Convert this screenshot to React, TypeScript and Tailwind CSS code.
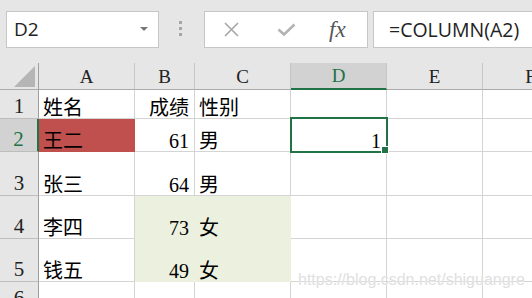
const serif = "font-['Liberation_Serif','Noto_Sans_CJK_SC',serif]";

type Row = {
  n: number;
  h: string;
  cells: string[];
};

const rows: Row[] = [
  { n: 1, h: "h-[29px]", cells: ["姓名", "成绩", "性别", "", "", ""] },
  { n: 2, h: "h-[33px]", cells: ["王二", "61", "男", "1", "", ""] },
  { n: 3, h: "h-[44px]", cells: ["张三", "64", "男", "", "", ""] },
  { n: 4, h: "h-[43px]", cells: ["李四", "73", "女", "", "", ""] },
  { n: 5, h: "h-[43px]", cells: ["钱五", "49", "女", "", "", ""] },
  { n: 6, h: "h-[29px]", cells: ["", "", "", "", "", ""] },
];

const letters = ["A", "B", "C", "D", "E", "F"];

const cellClass = (r: number, c: number) => {
  const isNum = c === 1 || (r === 2 && c === 3);
  const align = isNum ? "justify-end pr-[5px]" : "justify-start pl-[4px]";
  let fill = "bg-white border-[#d4d4d4]";
  if (r === 2 && c === 0) fill = "bg-[#c0504d] border-[#c0504d]";
  if ((r === 4 || r === 5) && (c === 1 || c === 2)) fill = "bg-[#ebf1de] border-[#ebf1de]";
  return `relative flex items-end border-r border-b whitespace-nowrap text-[20px] leading-none text-black ${align} ${fill}`;
};

const TopBar = () => (
  <div className="h-[63px] bg-[#e6e6e6] flex items-start pt-[11px] pl-[6px]">
    <div className="w-[153px] h-[37px] bg-white border border-[#c6c6c6] flex items-center justify-between pl-[7px] pr-[10px]">
      <span className="font-['Open_Sans',sans-serif] text-[19px] text-[#222]">D2</span>
      <svg width="8" height="5" viewBox="0 0 8 5">
        <path d="M0 0 L8 0 L4 4 Z" fill="#777" />
      </svg>
    </div>
    <div className="w-[45px] flex flex-col items-start pl-[20px] pt-[10px] gap-[3px]">
      <div className="w-[3px] h-[3px] bg-[#a6a6a6]" />
      <div className="w-[3px] h-[3px] bg-[#a6a6a6]" />
      <div className="w-[3px] h-[3px] bg-[#a6a6a6]" />
    </div>
    <div className="w-[164px] h-[37px] bg-white border border-[#c6c6c6] flex items-center pl-[18px]">
      <svg width="17" height="15" viewBox="0 0 17 15">
        <path d="M2 1 L15 14 M15 1 L2 14" stroke="#a6a6a6" strokeWidth="1.6" fill="none" />
      </svg>
      <svg className="ml-[37px]" width="19" height="13" viewBox="0 0 19 13">
        <path d="M1.5 6.5 L7 11.5 L17.5 1.5" stroke="#b3b3b3" strokeWidth="2.6" fill="none" />
      </svg>
      <span className="ml-[33px] font-['Liberation_Serif',serif] italic text-[23px] leading-none text-[#555]">
        fx
      </span>
    </div>
    <div className="ml-[5px] flex-1 h-[37px] bg-white border border-r-0 border-[#c6c6c6] flex items-center pl-[15px]">
      <span className="font-['Open_Sans',sans-serif] text-[19.5px] text-[#222]">=COLUMN(A2)</span>
    </div>
  </div>
);

export default function App() {
  return (
    <div className="w-[532px] h-[298px] overflow-hidden bg-white relative">
      <TopBar />
      <div className="grid grid-cols-[39px_96px_60px_96px_96px_96px_96px] h-[27px]">
        <div className="bg-[#e6e6e6] border-r border-b border-r-[#9e9e9e] border-b-[#ababab] flex items-end justify-end pr-[3px] pb-[2px]">
          <svg width="21" height="21" viewBox="0 0 21 21">
            <path d="M21 0 L21 21 L0 21 Z" fill="#b5b5b5" />
          </svg>
        </div>
        {letters.map((l) =>
          l === "D" ? (
            <div
              key={l}
              className={`bg-[#d2d2d2] border-r border-b-2 border-r-[#c6c6c6] border-b-[#217346] flex items-center justify-center text-[19px] leading-none text-[#217346] ${serif}`}
            >
              {l}
            </div>
          ) : (
            <div
              key={l}
              className={`bg-[#e6e6e6] border-r border-b border-r-[#c6c6c6] border-b-[#ababab] flex items-center justify-center text-[19px] leading-none text-[#222] ${serif}`}
            >
              {l}
            </div>
          )
        )}
      </div>
      {rows.map((row) => (
        <div key={row.n} className={`grid grid-cols-[39px_96px_60px_96px_96px_96px_96px] ${row.h}`}>
          {row.n === 2 ? (
            <div
              className={`bg-[#d2d2d2] border-r-2 border-b border-r-[#217346] border-b-[#bdbdbd] flex items-end justify-center pb-[1px] text-[21px] leading-none text-[#217346] ${serif}`}
            >
              {row.n}
            </div>
          ) : (
            <div
              className={`bg-[#e6e6e6] border-r border-b border-r-[#9e9e9e] border-b-[#bdbdbd] flex items-end justify-center pb-[1px] text-[21px] leading-none text-[#222] ${serif}`}
            >
              {row.n}
            </div>
          )}
          {row.cells.map((v, c) => (
            <div key={c} className={`${cellClass(row.n, c)} ${serif}`}>
              <span>{v}</span>
              {row.n === 2 && c === 3 ? (
                <>
                  <div className="absolute z-10 -left-[1px] -top-[2px] -right-[2px] -bottom-[2px] border-2 border-[#217346]" />
                  <div className="absolute z-20 -right-[3px] -bottom-[3px] w-[8px] h-[8px] bg-[#217346] border border-white" />
                </>
              ) : null}
            </div>
          ))}
        </div>
      ))}
      <div className="absolute z-30 left-[298px] top-[272px] font-['Liberation_Sans',sans-serif] text-[16px] leading-none text-[#e0e0e0] [text-shadow:0_0_2px_#ffffff]">
        https://blog.csdn.net/shiguangre
      </div>
    </div>
  );
}
